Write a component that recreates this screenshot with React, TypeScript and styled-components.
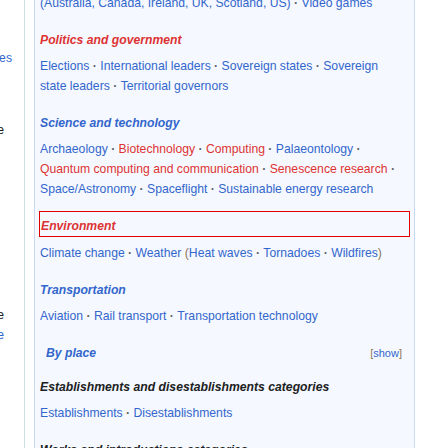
import React from "react";
import styled, { createGlobalStyle } from "styled-components";

const GlobalStyle = createGlobalStyle`
  html, body { margin: 0; padding: 0; background: #ffffff; overflow: hidden; }
  body { font-family: "Liberation Sans", Arial, sans-serif; font-size: 12.2px; color: #202122; }
`;

const BLUE = "#3366cc";
const RED = "#dd3333";
const BLACK = "#202122";

const Page = styled.div`
  display: flex;
  align-items: stretch;
  margin-top: -7px;
  height: 470px;
`;

const Side = styled.div`
  flex: none;
  width: 24px;
  border-right: 1px solid #cfe0e5;
  overflow: hidden;
  display: flex;
  flex-direction: column;
`;

const SideItem = styled.div<{ $mt: number; $pr: number; $color: string }>`
  display: flex;
  justify-content: flex-end;
  margin-top: ${(p) => p.$mt}px;
  padding-right: ${(p) => p.$pr}px;
  line-height: 20px;
  white-space: nowrap;
  color: ${(p) => p.$color};
  & > span { flex: none; }
`;

const Panel = styled.div`
  flex: none;
  width: 381px;
  box-sizing: border-box;
  margin-left: 9px;
  background: #f5f9ff;
  border-left: 1px solid #c9daf0;
  border-right: 1px solid #c9daf0;
  padding: 0 10px 0 5px;
`;

const Heading = styled.div<{ $color: string; $boxed?: boolean; $mt?: number }>`
  font-weight: bold;
  font-style: italic;
  line-height: 20px;
  color: ${(p) => p.$color};
  margin-top: ${(p) => (p.$mt !== undefined ? p.$mt : 17)}px;
  margin-bottom: 6px;
  ${(p) =>
    p.$boxed
      ? `border: 1px solid #e00000; padding: 4px 0 0 1px; margin-left: -1px; margin-right: -6px;`
      : ""}
`;

const List = styled.div`
  line-height: 20px;
`;

const Item = styled.span<{ $color: string }>`
  color: ${(p) => p.$color};
`;

const Sep = styled.span`
  color: #5c6068;
  font-weight: bold;
`;

const Paren = styled.span`
  color: #8a7458;
`;

const NavHeader = styled.div`
  display: flex;
  justify-content: space-between;
  align-items: center;
  margin-top: 17px;
  line-height: 20px;
`;

const NavTitle = styled.span`
  padding-left: 6px;
  font-weight: bold;
  font-style: italic;
  color: ${BLUE};
`;

const NavToggle = styled.span`
  font-size: 11px;
  padding-right: 2px;
  color: ${BLUE};
`;

type L = { t: string; c?: "r" | "b" };

const Links: React.FC<{ items: L[] }> = ({ items }) => (
  <>
    {items.map((it, i) => (
      <React.Fragment key={i}>
        <Item $color={it.c === "r" ? RED : BLUE}>{it.t}</Item>
        {i < items.length - 1 && <Sep>{"\u00a0· "}</Sep>}
      </React.Fragment>
    ))}
  </>
);

export default function App() {
  return (
    <>
      <GlobalStyle />
      <Page>
        <Side>
          <SideItem $mt={55} $pr={12} $color={BLUE}><span>Categories</span></SideItem>
          <SideItem $mt={52} $pr={20} $color={BLACK}><span>Vote</span></SideItem>
          <SideItem $mt={165} $pr={20} $color={BLACK}><span>Archive</span></SideItem>
          <SideItem $mt={0} $pr={20} $color={BLUE}><span>More</span></SideItem>
        </Side>
        <Panel>
          <List>
            <Links items={[{ t: "(Australia, Canada, Ireland, UK, Scotland, US)" }, { t: "Video games" }]} />
          </List>

          <Heading $color={RED}>Politics and government</Heading>
          <List>
            <Links
              items={[
                { t: "Elections" },
                { t: "International leaders" },
                { t: "Sovereign states" },
                { t: "Sovereign state leaders" },
                { t: "Territorial governors" },
              ]}
            />
          </List>

          <Heading $color={BLUE}>Science and technology</Heading>
          <List>
            <Links
              items={[
                { t: "Archaeology" },
                { t: "Biotechnology", c: "r" },
                { t: "Computing", c: "r" },
                { t: "Palaeontology" },
                { t: "Quantum computing and communication", c: "r" },
                { t: "Senescence research", c: "r" },
                { t: "Space/Astronomy" },
                { t: "Spaceflight" },
                { t: "Sustainable energy research" },
              ]}
            />
          </List>

          <Heading $color={RED} $boxed $mt={12}>Environment</Heading>
          <List>
            <Item $color={BLUE}>Climate change</Item>
            <Sep>{"\u00a0· "}</Sep>
            <Item $color={BLUE}>Weather</Item> <Paren>(</Paren>
            <Links items={[{ t: "Heat waves" }, { t: "Tornadoes" }, { t: "Wildfires" }]} />
            <Paren>)</Paren>
          </List>

          <Heading $color={BLUE}>Transportation</Heading>
          <List>
            <Links items={[{ t: "Aviation" }, { t: "Rail transport" }, { t: "Transportation technology" }]} />
          </List>

          <NavHeader>
            <NavTitle>By place</NavTitle>
            <NavToggle>
              <Paren>[</Paren>show<Paren>]</Paren>
            </NavToggle>
          </NavHeader>

          <Heading $color={BLACK} $mt={14}>Establishments and disestablishments categories</Heading>
          <List>
            <Links items={[{ t: "Establishments" }, { t: "Disestablishments" }]} />
          </List>

          <Heading $color={BLACK}>Works and introductions categories</Heading>
        </Panel>
      </Page>
    </>
  );
}
